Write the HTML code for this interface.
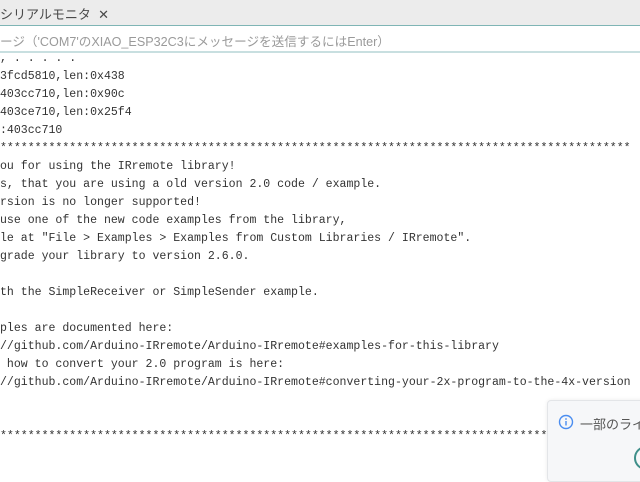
<!DOCTYPE html>
<html><head><meta charset="utf-8"><style>
body{margin:0;width:640px;height:466px;overflow:hidden;background:#fff;position:relative;font-family:"Liberation Sans","Noto Sans CJK JP",sans-serif}
.tab{position:absolute;left:0;top:0;width:640px;height:25px;background:#ececec;border-bottom:1px solid #7fb5b5}
.tab span{position:absolute;left:0;top:4px;font-size:13px;color:#4a4a4a}
.inp{position:absolute;left:0;top:26px;width:640px;height:25px;border-bottom:2px solid #c8dfe0;background:#fff}
.inp span{position:absolute;left:0;top:5px;font-size:12.6px;color:#9a9a9a;white-space:nowrap}
.l{position:absolute;left:0;font-family:"Liberation Mono",monospace;font-size:11.55px;color:#333;white-space:pre;line-height:18px}
.toast{position:absolute;left:547px;top:400px;width:110px;height:80px;background:#f6f7f9;border:1px solid #e3e5e8;border-radius:4px;box-shadow:0 0 4px rgba(0,0,0,.08)}
</style></head><body>
<div class="tab"><span>シリアルモニタ&nbsp;&nbsp;✕</span></div>
<div class="inp"><span>ージ（'COM7'のXIAO_ESP32C3にメッセージを送信するにはEnter）</span></div>
<div class="l" style="top:50px">, . . . . .</div>
<div class="l" style="top:68px">3fcd5810,len:0x438</div>
<div class="l" style="top:86px">403cc710,len:0x90c</div>
<div class="l" style="top:104px">403ce710,len:0x25f4</div>
<div class="l" style="top:122px">:403cc710</div>
<div class="l" style="top:140px">*******************************************************************************************</div>
<div class="l" style="top:158px">ou for using the IRremote library!</div>
<div class="l" style="top:176px">s, that you are using a old version 2.0 code / example.</div>
<div class="l" style="top:194px">rsion is no longer supported!</div>
<div class="l" style="top:212px">use one of the new code examples from the library,</div>
<div class="l" style="top:230px">le at "File &gt; Examples &gt; Examples from Custom Libraries / IRremote".</div>
<div class="l" style="top:248px">grade your library to version 2.6.0.</div>
<div class="l" style="top:284px">th the SimpleReceiver or SimpleSender example.</div>
<div class="l" style="top:320px">ples are documented here:</div>
<div class="l" style="top:338px">//github.com/Arduino-IRremote/Arduino-IRremote#examples-for-this-library</div>
<div class="l" style="top:356px"> how to convert your 2.0 program is here:</div>
<div class="l" style="top:374px">//github.com/Arduino-IRremote/Arduino-IRremote#converting-your-2x-program-to-the-4x-version</div>
<div class="l" style="top:428px">*******************************************************************************************</div>
<div class="toast">
<svg style="position:absolute;left:10px;top:13px" width="16" height="16" viewBox="0 0 16 16"><circle cx="8" cy="8" r="6.5" fill="none" stroke="#4a8df0" stroke-width="1.4"/><rect x="7.3" y="7" width="1.4" height="4.5" fill="#4a8df0"/><circle cx="8" cy="5" r=".9" fill="#4a8df0"/></svg>
<span style="position:absolute;left:32px;top:13px;font-size:13px;color:#555;white-space:nowrap">一部のライ</span>
<div style="position:absolute;left:86px;top:45px;width:20px;height:20px;border:2px solid #3f8f8a;border-radius:50%"></div>
</div>
</body></html>
